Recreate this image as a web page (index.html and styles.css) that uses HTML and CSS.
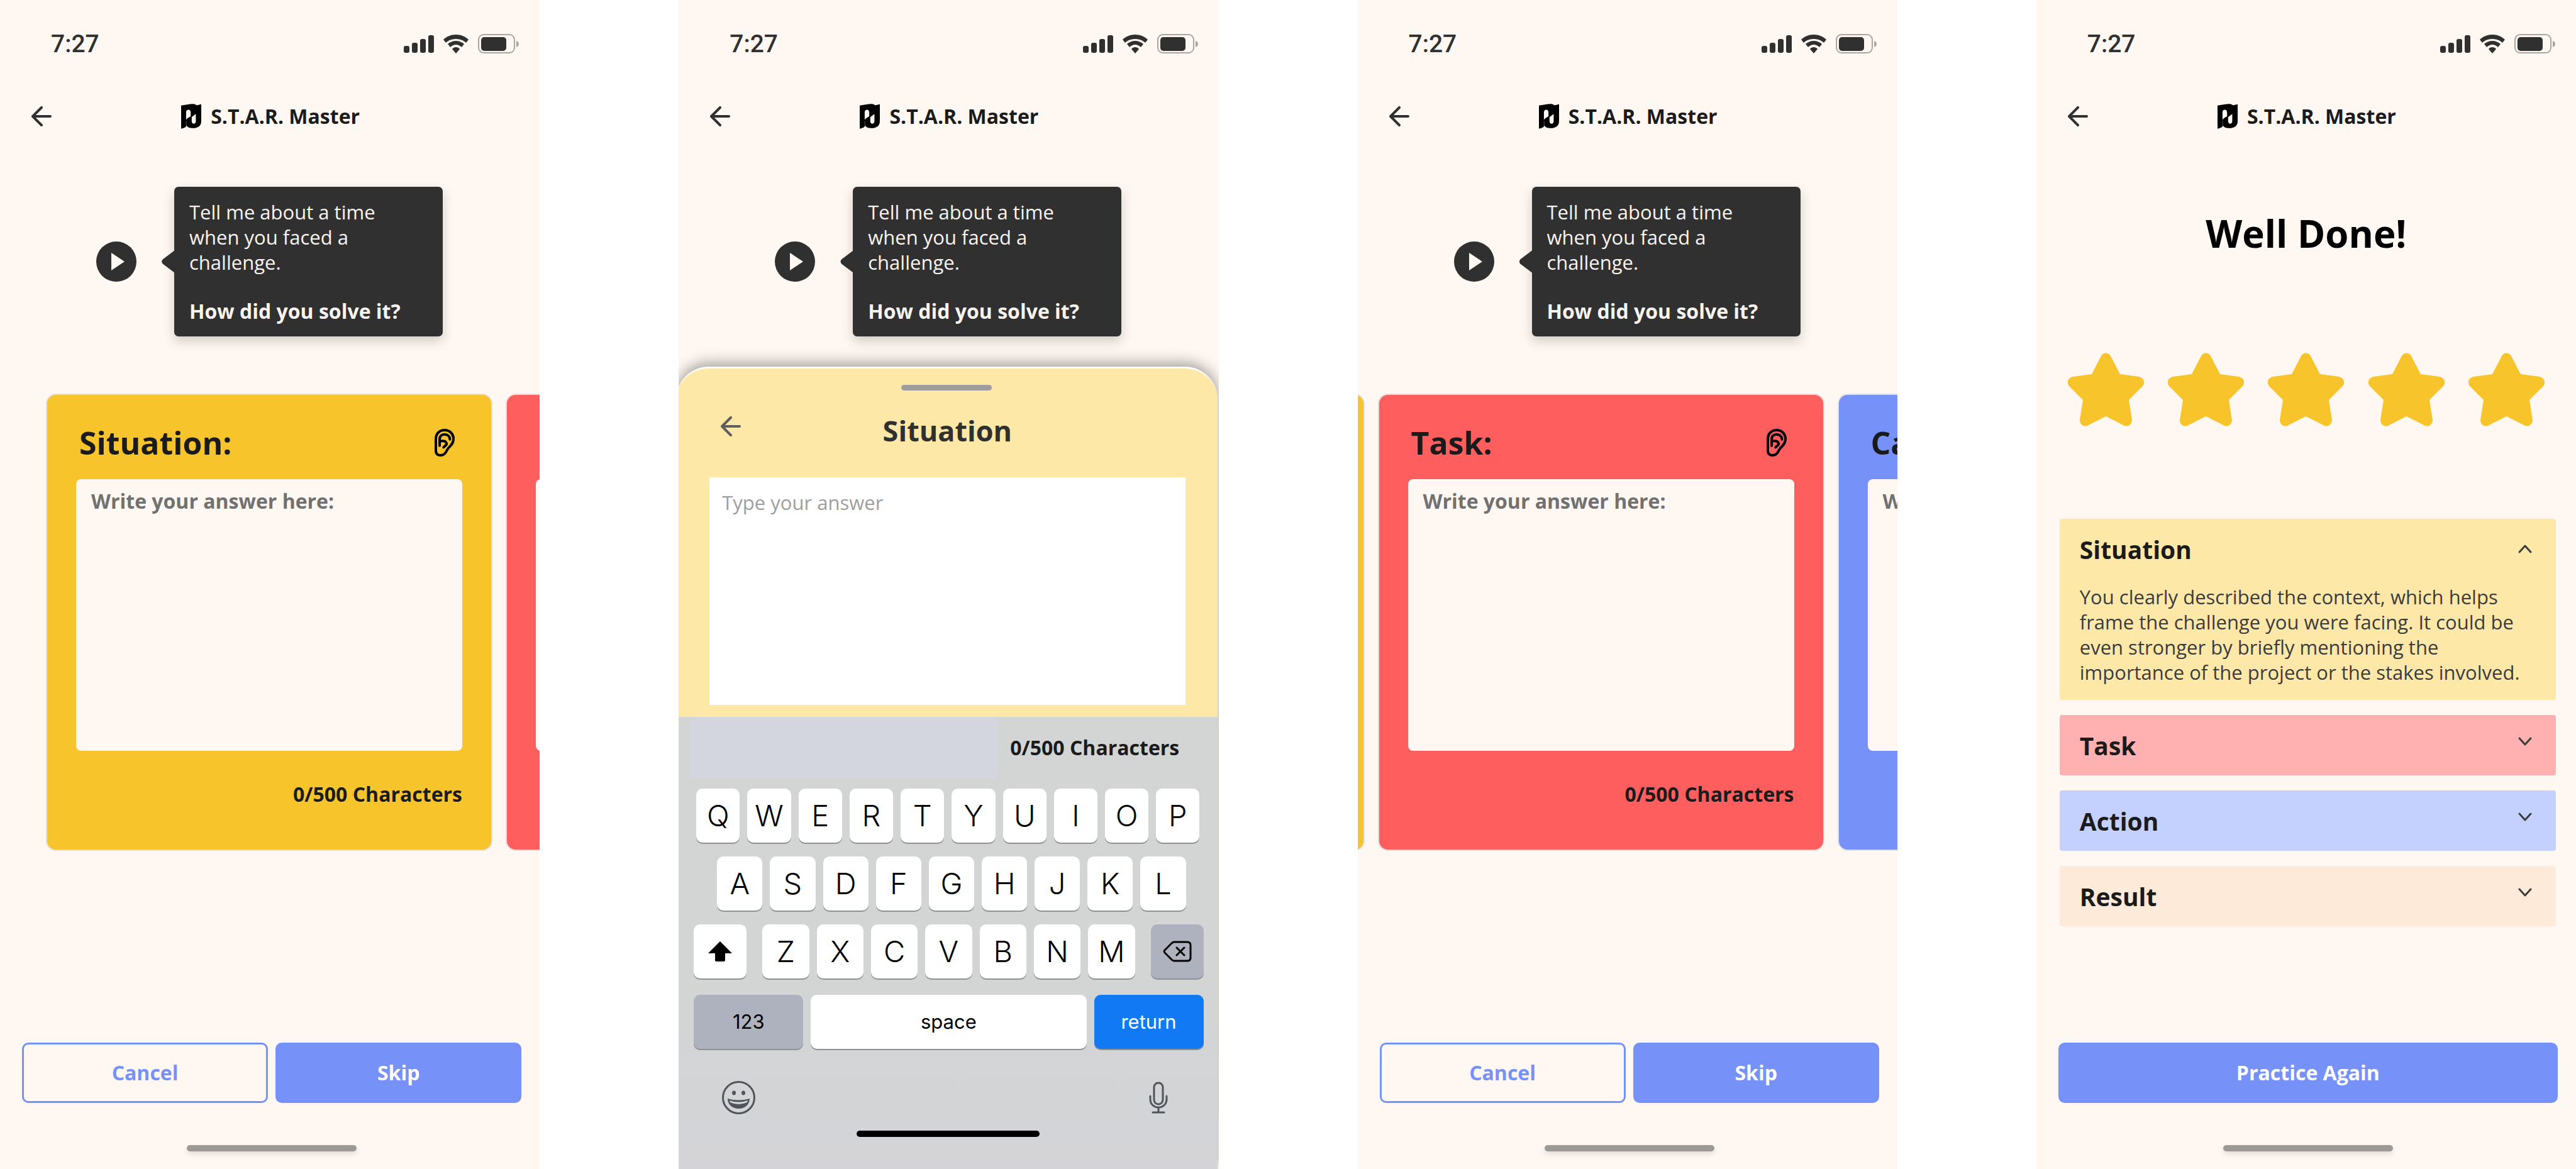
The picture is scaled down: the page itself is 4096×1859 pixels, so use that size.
FILE: index.html
```html
<!DOCTYPE html>
<html lang="en">
<head>
<meta charset="utf-8">
<meta name="viewport" content="width=device-width, initial-scale=1">
<title>S.T.A.R. Master</title>
<link rel="stylesheet" href="styles.css">
</head>
<body>
<svg class="sprite" aria-hidden="true">
  <symbol id="i-status" viewBox="0 0 183 31">
    <g fill="#303030">
      <rect x="0" y="19" width="9" height="11" rx="3"/>
      <rect x="13" y="14" width="9" height="16" rx="3"/>
      <rect x="26" y="8" width="9" height="22" rx="3"/>
      <rect x="39" y="2" width="9" height="28" rx="3"/>
      <path d="M83 1c8 0 15 3 20 8l-4 5c-4-4-10-6-16-6s-12 2-16 6l-4-5c5-5 12-8 20-8z"/>
      <path d="M83 11c5 0 10 2 13 5l-4 5c-2-2-6-4-9-4s-7 2-9 4l-4-5c3-3 8-5 13-5z"/>
      <path d="M83 21c2 0 5 1 6 3l-6 7-6-7c1-2 4-3 6-3z"/>
      <rect x="123" y="5" width="40" height="22" rx="5"/>
    </g>
    <rect x="119" y="1" width="57" height="29" rx="8" fill="none" stroke="#aaa5a2" stroke-width="2"/>
    <path d="M179 11c3 1 4 3 4 5s-1 4-4 5z" fill="#aaa5a2"/>
  </symbol>
  <symbol id="i-back" viewBox="0 0 32 32">
    <path d="M2 16H30M16 2L2 16L16 30" fill="none" stroke="currentColor" stroke-width="4" stroke-linecap="round" stroke-linejoin="round"/>
  </symbol>
  <symbol id="i-logo" viewBox="0 0 97 120">
    <path fill="#000" fill-rule="evenodd" d="M0 8C20 5 40 0 58 0C66 0 71 3 75 7L97 2V84C97 106 80 117 56 117C40 117 30 112 25 104C24 113 16 116 0 120ZM24 77C30 69 36 65 46 60V40C46 24 24 24 24 40ZM71 49L51 64V84C51 99 71 99 71 84Z"/>
    <path d="M25 106V82" stroke="#fff8f2" stroke-width="1"/>
  </symbol>
  <symbol id="i-ear" viewBox="0 0 96 132">
    <g fill="none" stroke="#000" stroke-width="12" stroke-linecap="round" stroke-linejoin="round">
      <path d="M6 106V48C6 22 24 6 48 6C73 6 90 24 90 48C90 76 70 82 60 100C52 116 46 126 28 126C14 126 6 118 6 106Z"/>
      <path d="M24 80V50C24 34 34 26 48 26C62 26 73 36 73 50"/>
      <path d="M26 58H40C54 58 62 70 54 78L43 88"/>
    </g>
  </symbol>
  <symbol id="i-star" viewBox="0 0 121 117">
    <path d="M53 5C56-1 65-1 68 5L83 34L113 38C121 40 124 48 118 54L97 75L102 107C102 115 94 119 88 115L60.500 101L33 115C27 119 19 115 19 107L24 75L3 54C-3 48 0 40 8 38L38 34Z" fill="#f7c42c"/>
  </symbol>
  <symbol id="i-chevron" viewBox="0 0 22 14">
    <path d="M2 2L11 12L20 2" fill="none" stroke="#3c3c3c" stroke-width="3" stroke-linecap="round" stroke-linejoin="round"/>
  </symbol>
</svg>

<main class="board">

  <section class="screen">
    <div class="status"><time>7:27</time><svg class="status-icons" aria-hidden="true"><use href="#i-status"/></svg></div>
    <header class="topbar">
      <button class="back" type="button" aria-label="Back"><svg><use href="#i-back"/></svg></button>
      <div class="brand"><svg class="logo" aria-hidden="true"><use href="#i-logo"/></svg><span>S.T.A.R. Master</span></div>
    </header>
    <div class="prompt">
      <button class="play" type="button" aria-label="Play question"><svg viewBox="0 0 64 64"><circle cx="32" cy="32" r="32" fill="#303030"/><path d="M24 18L45 32L24 46Z" fill="#fff8f2"/></svg></button>
      <div class="bubble"><p>Tell me about a time when you faced a challenge.</p><p class="ask">How did you solve it?</p></div>
    </div>
    <div class="track">
      <article class="card yellow">
        <div class="card-head"><label for="a1">Situation:</label><svg class="ear" aria-hidden="true"><use href="#i-ear"/></svg></div>
        <textarea id="a1" placeholder="Write your answer here:"></textarea>
        <p class="count">0/500 Characters</p>
      </article>
      <article class="card red">
        <div class="card-head"></div>
        <textarea aria-label="Task"></textarea>
      </article>
    </div>
    <footer class="foot">
      <div class="actions"><button class="btn outline" type="button">Cancel</button><button class="btn" type="button">Skip</button></div>
      <div class="home"></div>
    </footer>
  </section>

  <section class="screen">
    <div class="status"><time>7:27</time><svg class="status-icons" aria-hidden="true"><use href="#i-status"/></svg></div>
    <header class="topbar">
      <button class="back" type="button" aria-label="Back"><svg><use href="#i-back"/></svg></button>
      <div class="brand"><svg class="logo" aria-hidden="true"><use href="#i-logo"/></svg><span>S.T.A.R. Master</span></div>
    </header>
    <div class="prompt">
      <button class="play" type="button" aria-label="Play question"><svg viewBox="0 0 64 64"><circle cx="32" cy="32" r="32" fill="#303030"/><path d="M24 18L45 32L24 46Z" fill="#fff8f2"/></svg></button>
      <div class="bubble"><p>Tell me about a time when you faced a challenge.</p><p class="ask">How did you solve it?</p></div>
    </div>
    <div class="sheet">
      <div class="grip"></div>
      <div class="sheet-head">
        <button class="back" type="button" aria-label="Close"><svg><use href="#i-back"/></svg></button>
        <label for="b1">Situation</label>
      </div>
      <textarea id="b1" placeholder="Type your answer"></textarea>
      <div class="keyboard">
        <div class="suggest"><div class="slot"></div><p class="count">0/500 Characters</p></div>
        <div class="keys top"><button>Q</button><button>W</button><button>E</button><button>R</button><button>T</button><button>Y</button><button>U</button><button>I</button><button>O</button><button>P</button></div>
        <div class="keys middle"><button>A</button><button>S</button><button>D</button><button>F</button><button>G</button><button>H</button><button>J</button><button>K</button><button>L</button></div>
        <div class="keys third">
          <button class="side" aria-label="Shift"><svg viewBox="0 0 38 32"><path d="M19 0L38 19H27V30Q27 32 25 32H13Q11 32 11 30V19H0Z"/></svg></button>
          <div class="letters"><button>Z</button><button>X</button><button>C</button><button>V</button><button>B</button><button>N</button><button>M</button></div>
          <button class="side grey" aria-label="Delete"><svg class="del" viewBox="0 0 46 34"><path d="M18 2H39Q44 2 44 7V27Q44 32 39 32H18Q16 32 14 30L3 19Q1 17 3 15L14 4Q16 2 18 2ZM22 11L34 23M34 11L22 23" fill="none" stroke="#000" stroke-width="3" stroke-linecap="round" stroke-linejoin="round"/></svg></button>
        </div>
        <div class="keys last"><button class="grey wide">123</button><button class="space">space</button><button class="return wide">return</button></div>
        <div class="tools">
          <button aria-label="Emoji"><svg class="emoji" viewBox="0 0 53 53"><circle cx="26.500" cy="26.500" r="25" fill="none" stroke="#50555c" stroke-width="3"/><ellipse cx="19" cy="19" rx="3" ry="3.500" fill="#50555c"/><ellipse cx="34" cy="19" rx="3" ry="3.500" fill="#50555c"/><path d="M9 28Q26 33 44 28C44 37 37 44 26.500 44S9 37 9 28Z" fill="#50555c"/><path d="M12 31Q26 36 41 31L40 34Q26 40 13 34Z" fill="#d4d5d6"/></svg></button>
          <button aria-label="Dictate"><svg class="mic" viewBox="0 0 30 51"><g fill="none" stroke="#50555c" stroke-width="3" stroke-linecap="round"><rect x="8" y="2" width="14" height="34" rx="7"/><path d="M2 23V28C2 36 8 41 15 41S28 36 28 28V23M15 41V49M6 49H24"/></g></svg></button>
        </div>
        <div class="home dark"></div>
      </div>
    </div>
  </section>

  <section class="screen">
    <div class="status"><time>7:27</time><svg class="status-icons" aria-hidden="true"><use href="#i-status"/></svg></div>
    <header class="topbar">
      <button class="back" type="button" aria-label="Back"><svg><use href="#i-back"/></svg></button>
      <div class="brand"><svg class="logo" aria-hidden="true"><use href="#i-logo"/></svg><span>S.T.A.R. Master</span></div>
    </header>
    <div class="prompt">
      <button class="play" type="button" aria-label="Play question"><svg viewBox="0 0 64 64"><circle cx="32" cy="32" r="32" fill="#303030"/><path d="M24 18L45 32L24 46Z" fill="#fff8f2"/></svg></button>
      <div class="bubble"><p>Tell me about a time when you faced a challenge.</p><p class="ask">How did you solve it?</p></div>
    </div>
    <div class="track second">
      <article class="card yellow"></article>
      <article class="card red">
        <div class="card-head"><label for="c2">Task:</label><svg class="ear" aria-hidden="true"><use href="#i-ear"/></svg></div>
        <textarea id="c2" placeholder="Write your answer here:"></textarea>
        <p class="count">0/500 Characters</p>
      </article>
      <article class="card blue">
        <div class="card-head"><label for="c3">Ca</label></div>
        <textarea id="c3" placeholder="Write your answer here:"></textarea>
      </article>
    </div>
    <footer class="foot">
      <div class="actions"><button class="btn outline" type="button">Cancel</button><button class="btn" type="button">Skip</button></div>
      <div class="home"></div>
    </footer>
  </section>

  <section class="screen">
    <div class="status"><time>7:27</time><svg class="status-icons" aria-hidden="true"><use href="#i-status"/></svg></div>
    <header class="topbar">
      <button class="back" type="button" aria-label="Back"><svg><use href="#i-back"/></svg></button>
      <div class="brand"><svg class="logo" aria-hidden="true"><use href="#i-logo"/></svg><span>S.T.A.R. Master</span></div>
    </header>
    <h1 class="praise">Well Done!</h1>
    <div class="stars" role="img" aria-label="5 of 5 stars"><svg><use href="#i-star"/></svg><svg><use href="#i-star"/></svg><svg><use href="#i-star"/></svg><svg><use href="#i-star"/></svg><svg><use href="#i-star"/></svg></div>
    <div class="feedback">
      <details class="item sun" open>
        <summary>Situation<svg aria-hidden="true"><use href="#i-chevron"/></svg></summary>
        <p>You clearly described the context, which helps frame the challenge you were facing. It could be even stronger by briefly mentioning the importance of the project or the stakes involved.</p>
      </details>
      <details class="item rose"><summary>Task<svg aria-hidden="true"><use href="#i-chevron"/></svg></summary></details>
      <details class="item sky"><summary>Action<svg aria-hidden="true"><use href="#i-chevron"/></svg></summary></details>
      <details class="item peach"><summary>Result<svg aria-hidden="true"><use href="#i-chevron"/></svg></summary></details>
    </div>
    <footer class="foot">
      <div class="actions"><button class="btn" type="button">Practice Again</button></div>
      <div class="home"></div>
    </footer>
  </section>

</main>
</body>
</html>
```
FILE: styles.css
```css
* { box-sizing: border-box; margin: 0; padding: 0; }

body {
  background: #fff;
  color: #1b1b1b;
  font-family: "Open Sans", "Noto Sans", sans-serif;
  font-size: 31px;
  line-height: 40px;
}

button { border: 0; background: none; font: inherit; color: inherit; }
textarea { display: block; width: 100%; border: 0; resize: none; outline: 0; font: inherit; }
svg { display: block; }
.sprite { position: absolute; width: 0; height: 0; }

.board {
  display: grid;
  grid-template-columns: repeat(4, minmax(0, 1fr));
  column-gap: 221px;
  min-height: 100vh;
}

.screen {
  display: flex;
  flex-direction: column;
  overflow: hidden;
  background: #fff8f2;
}

/* status bar and title bar */
.status {
  display: flex;
  justify-content: space-between;
  align-items: center;
  height: 96px;
  padding: 43px 33px 0 81px;
}
.status time { font: 500 39px/54px Roboto, sans-serif; color: #303030; }
.status-icons { width: 183px; height: 31px; }

.topbar {
  display: grid;
  grid-template-columns: 1fr auto 1fr;
  align-items: center;
  height: 66px;
  margin-top: 56px;
  padding: 0 46px 0 48px;
}
.back { width: 36px; height: 42px; padding: 5px 2px; color: #303030; }
.back svg { width: 32px; height: 32px; }
.brand { display: flex; align-items: center; gap: 15px; font-size: 32px; font-weight: 700; }
.logo { width: 32px; height: 40px; }

/* question bubble */
.prompt { display: flex; align-items: center; gap: 60px; margin-top: 79px; padding-left: 153px; }
.play, .play svg { width: 64px; height: 64px; }
.bubble {
  position: relative;
  width: 427px;
  padding: 20px 40px 20px 24px;
  border-radius: 7px;
  background: #303030;
  color: #f8f4f0;
  box-shadow: 0 8px 18px rgba(48, 48, 48, .22);
}
.bubble::before {
  content: "";
  position: absolute;
  left: -20px;
  top: 50%;
  width: 21px;
  height: 36px;
  margin-top: -18px;
  background: #303030;
  clip-path: polygon(100% 0, 100% 100%, 8% 60%, 0 50%, 8% 40%);
}
.ask { margin-top: 38px; font-size: 32px; font-weight: 700; white-space: nowrap; }

/* answer cards */
.track { display: flex; gap: 21px; margin: 91px 0 0 73px; }
.track.second { margin-left: -699px; }
.card {
  flex: none;
  width: 710px;
  padding: 46px 46px 68px;
  border: 2px solid #e4dfdb;
  border-radius: 16px;
}
.yellow { background: #f7c42c; }
.red { background: #ff5e5e; }
.blue { background: #7692f9; }
.card-head {
  display: flex;
  justify-content: space-between;
  align-items: center;
  height: 60px;
  padding: 0 12px 0 5px;
  margin-bottom: 28px;
}
.card-head label { font-size: 50px; font-weight: 700; line-height: 60px; }
.ear { width: 32px; height: 44px; }
.card textarea {
  height: 432px;
  padding: 15px 24px;
  border-radius: 8px;
  background: #fff8f2;
  font-size: 32px;
  font-weight: 700;
}
.card textarea::placeholder { color: #717171; opacity: 1; }
.count { font-size: 32px; font-weight: 700; text-align: right; }
.card .count { margin-top: 49px; }

/* bottom actions */
.foot { margin-top: auto; padding: 0 29px 28px 35px; }
.actions { display: flex; gap: 12px; }
.btn {
  flex: 1;
  height: 96px;
  border: 3px solid #7692f9;
  border-radius: 10px;
  background: #7692f9;
  color: #fff;
  font-size: 32px;
  font-weight: 700;
}
.btn.outline { background: transparent; color: #7692f9; }
.home {
  width: 270px;
  height: 10px;
  margin: 67px auto 0;
  border-radius: 5px;
  background: #9c9a98;
  box-shadow: 0 4px 8px rgba(0, 0, 0, .12);
}

/* typing sheet */
.sheet {
  display: flex;
  flex-direction: column;
  flex: 1;
  margin: 48px 2px 0 -4px;
  border-top: 3px solid #fff;
  border-radius: 52px 52px 0 0;
  background: #fee8a8;
  box-shadow: 0 -6px 22px rgba(0, 0, 0, .36);
}
.grip { width: 144px; height: 9px; margin: 26px auto 36px; border-radius: 5px; background: #9e9e9e; }
.sheet-head {
  display: grid;
  grid-template-columns: 1fr auto 1fr;
  align-items: start;
  margin: 0 51px 46px 53px;
  padding: 0 16px;
}
.sheet-head .back { color: #5d5f5f; }
.sheet-head label { font-size: 45px; font-weight: 700; line-height: 56px; color: #303030; }
.sheet > textarea {
  width: auto;
  height: 362px;
  margin: 0 51px 19px 53px;
  padding: 20px;
  background: #fff;
}
.sheet > textarea::placeholder { color: #9e9e9e; opacity: 1; }

.keyboard {
  flex: 1;
  padding-left: 4px;
  background: linear-gradient(#d3d5d4 60%, #d4d4d8);
  color: #000;
  font-family: Inter, sans-serif;
}
.suggest { display: flex; align-items: center; gap: 20px; padding-left: 18px; font-family: "Open Sans", sans-serif; color: #1b1b1b; }
.slot { width: 489px; height: 98px; background: #d3d6df; }
.keys { display: flex; gap: 12px; margin-top: 22px; }
.keys button {
  flex: 1;
  min-width: 0;
  height: 86px;
  border-radius: 10px;
  background: #fff;
  box-shadow: 0 2px 0 #8f9192;
  font-size: 47px;
  font-weight: 300;
}
.keys.top { margin-top: 16px; padding: 0 28px; }
.keys.middle { padding: 0 50px 0 61px; }
.keys.third { gap: 25px; padding: 0 22px 0 24px; }
.keys.last { margin-top: 26px; padding: 0 22px 0 24px; }
.letters { display: flex; flex: 1; gap: 12px; }
.keys .side { display: grid; place-items: center; flex: none; width: 84px; }
.side svg { width: 38px; height: 32px; }
.side .del { width: 46px; height: 34px; }
.keys .grey { background: #aeb2be; }
.keys.last button { font-size: 31px; font-weight: 400; }
.keys .wide { flex: none; width: 174px; }
.keys .return { background: #1079f3; color: #fff; }
.tools { display: flex; justify-content: space-between; margin-top: 51px; padding: 0 79px 0 69px; }
.emoji { width: 53px; height: 53px; }
.mic { width: 30px; height: 51px; }
.home.dark { width: 291px; margin-top: 26px; background: #000; box-shadow: none; }

/* results */
.praise { margin-top: 117px; font-size: 60px; font-weight: 700; line-height: 72px; text-align: center; color: #000; }
.stars { display: flex; justify-content: space-between; margin-top: 154px; padding: 0 50px; }
.stars svg { width: 121px; height: 117px; }
.feedback { display: flex; flex-direction: column; gap: 24px; margin-top: 147px; padding: 0 32px 0 37px; }
.item { border-radius: 4px; }
.item summary {
  display: flex;
  justify-content: space-between;
  align-items: flex-start;
  padding: 21px 38px 19px 32px;
  font-size: 39px;
  font-weight: 700;
  line-height: 56px;
  list-style: none;
}
.item summary svg { width: 22px; height: 14px; margin-top: 14px; }
.item[open] summary svg { margin-top: 20px; transform: rotate(180deg); }
.item p { padding: 8px 32px 24px; color: #3c3c3c; }
.sun { background: #fee8a8; }
.rose { background: #ffb0b0; }
.sky { background: #c4d1ff; }
.peach { background: #feead9; }
```
